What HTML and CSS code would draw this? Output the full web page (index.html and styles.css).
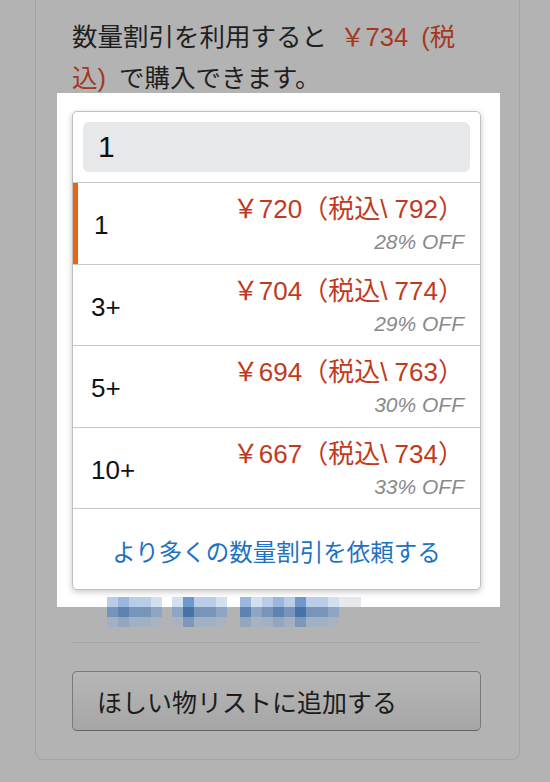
FILE: index.html
```html
<!DOCTYPE html>
<html lang="ja">
<head>
<meta charset="utf-8">
<title>数量割引</title>
<link rel="stylesheet" href="styles.css">
</head>
<body>
<div class="card">
  <p class="lead">数量割引を利用すると <span class="red">￥734 (税</span><br><span class="red">込)</span> で購入できます。</p>

  <div class="panel">
    <div class="box">
      <div class="head">
        <div class="input">1</div>
      </div>
      <div class="row active">
        <div class="qty">1</div>
        <div class="price"><div class="amt">￥720（税込\ 792）</div><div class="off">28% OFF</div></div>
      </div>
      <div class="row">
        <div class="qty">3+</div>
        <div class="price"><div class="amt">￥704（税込\ 774）</div><div class="off">29% OFF</div></div>
      </div>
      <div class="row">
        <div class="qty">5+</div>
        <div class="price"><div class="amt">￥694（税込\ 763）</div><div class="off">30% OFF</div></div>
      </div>
      <div class="row">
        <div class="qty">10+</div>
        <div class="price"><div class="amt">￥667（税込\ 734）</div><div class="off">33% OFF</div></div>
      </div>
      <div class="more">より多くの数量割引を依頼する</div>
    </div>
  </div>

  <div class="mosaic">
    <div class="grp g1">
      <div class="col"><i></i><i></i><i></i></div>
      <div class="col d"><i></i><i></i><i></i></div>
      <div class="col"><i></i><i></i><i></i></div>
      <div class="col"><i></i><i></i><i></i></div>
      <div class="col l"><i></i><i></i><i></i></div>
    </div>
    <div class="grp g2">
      <div class="col l"><i></i><i></i><i></i></div>
      <div class="col dd"><i></i><i></i><i></i></div>
      <div class="col"><i></i><i></i><i></i></div>
      <div class="col"><i></i><i></i><i></i></div>
      <div class="col l"><i></i><i></i><i></i></div>
    </div>
    <div class="grp g3">
      <div class="col d"><i></i><i></i><i></i></div>
      <div class="col l"><i></i><i></i><i></i></div>
      <div class="col"><i></i><i></i><i></i></div>
      <div class="col d"><i></i><i></i><i></i></div>
      <div class="col"><i></i><i></i><i></i></div>
      <div class="col dd"><i></i><i></i><i></i></div>
      <div class="col"><i></i><i></i><i></i></div>
      <div class="col"><i></i><i></i><i></i></div>
      <div class="col l"><i></i><i></i><i></i></div>
      <div class="col f"><i></i><i></i><i></i></div>
      <div class="col f"><i></i><i></i><i></i></div>
    </div>
  </div>

  <div class="divider"></div>

  <div class="btn">ほしい物リストに追加する</div>
</div>
</body>
</html>
```

FILE: styles.css
```css
html, body {
  margin: 0;
  padding: 0;
}
body {
  width: 550px;
  height: 782px;
  overflow: hidden;
  background: #b3b3b3;
  font-family: "Liberation Sans", "Noto Sans CJK JP", sans-serif;
  color: #1e1e1e;
}
.card {
  box-sizing: border-box;
  width: 485px;
  margin-left: 35px;
  border: 1px solid #a3a3a3;
  border-top: none;
  border-radius: 0 0 8px 8px;
  padding: 0 38px 28px 36px;
}
.lead {
  margin: 0;
  padding-top: 17px;
  font-size: 25.5px;
  line-height: 41px;
  white-space: nowrap;
  word-spacing: 6px;
  color: #1f1f1f;
}
.red {
  color: #a4391f;
}
.panel {
  margin: -6px -19px 0 -15px;
  padding: 18px 19px 17px 15px;
  background: #ffffff;
}
.box {
  border: 1px solid #c0c0c0;
  border-radius: 5px;
  background: #fff;
  box-shadow: 0 2px 6px rgba(0, 0, 0, 0.22);
  overflow: hidden;
}
.head {
  padding: 10px;
  border-bottom: 1px solid #c9c9c9;
}
.input {
  height: 50px;
  box-sizing: border-box;
  background: #e7e8ea;
  border-radius: 6px;
  padding-left: 15px;
  font-size: 30px;
  line-height: 50px;
  color: #111;
}
.row {
  position: relative;
  height: 80.5px;
  border-bottom: 1px solid #c9c9c9;
  display: flex;
  justify-content: space-between;
  align-items: center;
  padding: 0 16px 0 18px;
}
.row.active {
  padding-left: 21px;
}
.row.active::before {
  content: "";
  position: absolute;
  left: 0;
  top: 0;
  bottom: 0;
  width: 5px;
  background: #ea6418;
}
.qty {
  font-size: 26px;
  color: #111;
  padding-top: 5px;
}
.price {
  align-self: flex-start;
  padding-top: 9px;
  text-align: right;
}
.amt {
  font-size: 26px;
  line-height: 34px;
  color: #c13a1c;
}
.off {
  font-size: 21px;
  line-height: 32px;
  font-style: italic;
  color: #8a8a8a;
}
.more {
  height: 80px;
  display: flex;
  align-items: center;
  justify-content: center;
  font-size: 23.5px;
  color: #1e72c2;
  padding-top: 4px;
  box-sizing: border-box;
}
.mosaic {
  position: relative;
  z-index: 1;
  display: flex;
  margin: -10px 0 0 35px;
  height: 30px;
}
.grp {
  display: flex;
}
.g2 { margin-left: 10px; }
.g3 { margin-left: 13px; }
.col {
  width: 11px;
  display: flex;
  flex-direction: column;
}
.col i {
  display: block;
  height: 10px;
}
.col i:nth-child(1) { background: #b9cde8; }
.col i:nth-child(2) { background: #7894ba; }
.col i:nth-child(3) { background: #a2b0c3; }
.col.l i:nth-child(1) { background: #d2dff0; }
.col.l i:nth-child(2) { background: #8ea5c3; }
.col.l i:nth-child(3) { background: #a9b3c0; }
.col.d i:nth-child(1) { background: #9ab7dd; }
.col.d i:nth-child(2) { background: #5e83b1; }
.col.d i:nth-child(3) { background: #93a6be; }
.col.dd i:nth-child(1) { background: #6f98cc; }
.col.dd i:nth-child(2) { background: #4674a8; }
.col.dd i:nth-child(3) { background: #7f98b8; }
.col.f i:nth-child(1) { background: #e6e8ec; }
.col.f i:nth-child(2) { background: transparent; }
.col.f i:nth-child(3) { background: transparent; }
.divider {
  margin-top: 15px;
  height: 1px;
  background: #a4a4a4;
}
.btn {
  margin-top: 28px;
  height: 60px;
  box-sizing: border-box;
  border: 1px solid #7a7a7a;
  border-bottom-color: #646464;
  border-radius: 5px;
  background: linear-gradient(#b7b7b7, #a6a6a6);
  display: flex;
  align-items: center;
  padding-left: 24px;
  font-size: 25px;
  color: #1c1c1c;
}
```
